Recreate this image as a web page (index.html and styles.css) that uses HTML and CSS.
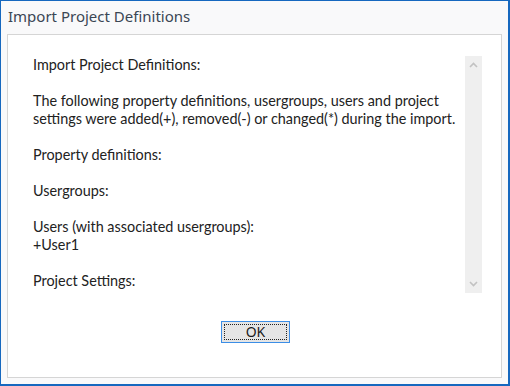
FILE: index.html
```html
<!DOCTYPE html>
<html lang="en">
<head>
  <meta charset="UTF-8">
  <title>Import Project Definitions</title>
  <link rel="stylesheet" href="styles.css">
</head>
<body>
  <div class="window">
    <div class="title">Import Project Definitions</div>
    <div class="panel">
      <div class="log-box">
        <div class="log">
          <p>Import Project Definitions:</p>
          <p>The following property definitions, usergroups, users and project settings were added(+), removed(-) or changed(*) during the import.</p>
          <p>Property definitions:</p>
          <p>Usergroups:</p>
          <p>Users (with associated usergroups):<br>+User1</p>
          <p>Project Settings:</p>
        </div>
        <div class="scrollbar">
          <svg width="17" height="17" viewBox="0 0 17 17"><path d="M5 10 L8.5 6.5 L12 10" fill="none" stroke="#c2c2c2" stroke-width="1.6"/></svg>
          <svg width="17" height="17" viewBox="0 0 17 17"><path d="M5 7 L8.5 10.5 L12 7" fill="none" stroke="#c2c2c2" stroke-width="1.6"/></svg>
        </div>
      </div>
      <div class="actions">
        <button class="ok"><span>OK</span></button>
      </div>
    </div>
  </div>
</body>
</html>
```

FILE: styles.css
```css
* {
  box-sizing: border-box;
}
body {
  margin: 0;
  width: 510px;
  height: 386px;
  overflow: hidden;
}
.window {
  width: 510px;
  height: 386px;
  background: #f9f9fa;
  border: 1px solid #1668bf;
  border-right-width: 2px;
  border-bottom-width: 2px;
  padding: 0 6px 6px 6px;
  display: flex;
  flex-direction: column;
}
.title {
  height: 33px;
  padding: 5px 0 0 1px;
  font-family: "Noto Sans", sans-serif;
  font-size: 15px;
  color: #3a4654;
}
.panel {
  flex: 1;
  background: #ffffff;
  border: 1px solid #d5d5d5;
  display: flex;
  flex-direction: column;
}
.log-box {
  display: flex;
  margin: 21px 19px 0 20px;
  height: 237px;
}
.log {
  flex: 1;
  padding: 0 0 0 5px;
  font-family: Lato, "Liberation Sans", sans-serif;
  font-size: 14.4px;
  line-height: 18px;
  color: #222222;
}
.log p {
  margin: 0 0 18px 0;
}
.scrollbar {
  width: 17px;
  background: #efefef;
  display: flex;
  flex-direction: column;
  justify-content: space-between;
  padding: 1px 0;
}
.actions {
  display: flex;
  justify-content: center;
  padding-top: 28px;
}
.ok {
  width: 69px;
  height: 22px;
  margin-left: 2px;
  padding: 2px;
  border: 1px solid #3c8ee6;
  background: #e5e5e5;
  font-family: "Noto Sans", sans-serif;
  font-size: 14px;
  color: #1a1a1a;
}
.ok span {
  display: block;
  height: 100%;
  border: 1px dotted #222;
  line-height: 14px;
}
```
